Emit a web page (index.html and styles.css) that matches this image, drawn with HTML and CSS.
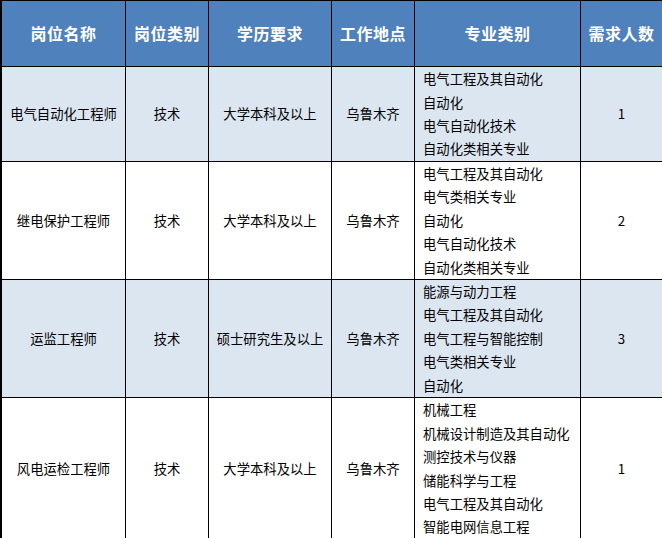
FILE: index.html
```html
<!DOCTYPE html>
<html lang="zh-CN">
<head>
<meta charset="utf-8">
<title>招聘岗位</title>
<link rel="stylesheet" href="styles.css">
</head>
<body>
<div class="sheet">
  <div class="cell head">岗位名称</div>
  <div class="cell head">岗位类别</div>
  <div class="cell head">学历要求</div>
  <div class="cell head">工作地点</div>
  <div class="cell head">专业类别</div>
  <div class="cell head">需求人数</div>

  <div class="cell shade">电气自动化工程师</div>
  <div class="cell shade">技术</div>
  <div class="cell shade">大学本科及以上</div>
  <div class="cell shade">乌鲁木齐</div>
  <div class="cell shade list">
    <span>电气工程及其自动化</span>
    <span>自动化</span>
    <span>电气自动化技术</span>
    <span>自动化类相关专业</span>
  </div>
  <div class="cell shade">1</div>

  <div class="cell">继电保护工程师</div>
  <div class="cell">技术</div>
  <div class="cell">大学本科及以上</div>
  <div class="cell">乌鲁木齐</div>
  <div class="cell list">
    <span>电气工程及其自动化</span>
    <span>电气类相关专业</span>
    <span>自动化</span>
    <span>电气自动化技术</span>
    <span>自动化类相关专业</span>
  </div>
  <div class="cell">2</div>

  <div class="cell shade">运监工程师</div>
  <div class="cell shade">技术</div>
  <div class="cell shade">硕士研究生及以上</div>
  <div class="cell shade">乌鲁木齐</div>
  <div class="cell shade list">
    <span>能源与动力工程</span>
    <span>电气工程及其自动化</span>
    <span>电气工程与智能控制</span>
    <span>电气类相关专业</span>
    <span>自动化</span>
  </div>
  <div class="cell shade">3</div>

  <div class="cell">风电运检工程师</div>
  <div class="cell">技术</div>
  <div class="cell">大学本科及以上</div>
  <div class="cell">乌鲁木齐</div>
  <div class="cell list">
    <span>机械工程</span>
    <span>机械设计制造及其自动化</span>
    <span>测控技术与仪器</span>
    <span>储能科学与工程</span>
    <span>电气工程及其自动化</span>
    <span>智能电网信息工程</span>
  </div>
  <div class="cell">1</div>
</div>
</body>
</html>
```

FILE: styles.css
```css
html, body {
  margin: 0;
  padding: 0;
  background: #ffffff;
  overflow: hidden;
}

.sheet {
  display: grid;
  grid-template-columns: 124px 83px 123px 83px 166px 82px;
  grid-template-rows: 66px 95px 118px 118px 142px;
  width: max-content;
  border-left: 2px solid #000;
  border-top: 1px solid #000;
  font-family: "Noto Sans CJK SC", "Noto Sans", sans-serif;
  font-size: 13.33px;
  color: #000;
}

.cell {
  box-sizing: border-box;
  border-right: 1px solid #000;
  border-bottom: 1px solid #000;
  display: flex;
  align-items: center;
  justify-content: center;
  text-align: center;
  white-space: nowrap;
  line-height: 23.4px;
}

.head {
  background: #4f81bd;
  color: #ffffff;
  font-weight: bold;
  font-size: 16px;
  letter-spacing: 0.5px;
}

.shade {
  background: #dce6f1;
}

.list {
  flex-direction: column;
  align-items: flex-start;
  justify-content: center;
  padding-left: 8px;
  text-align: left;
}
```
